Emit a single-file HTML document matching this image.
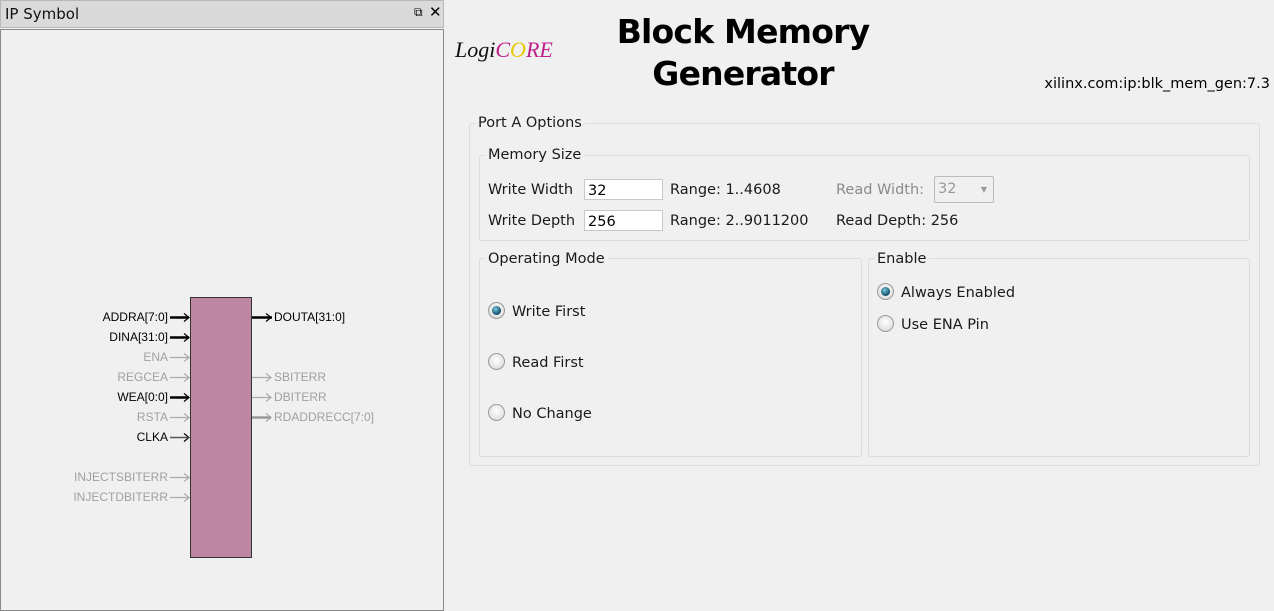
<!DOCTYPE html>
<html><head><style>
body{margin:0;width:1274px;height:600px;background:#f0f0f0;position:relative;overflow:hidden;font-family:"Liberation Sans",Arial,sans-serif;}
.a{position:absolute;white-space:nowrap}
.t{color:#1a1a1a;font-family:"DejaVu Sans",sans-serif;font-size:14.5px;margin-top:2px}
.fs{position:absolute;border:1px solid #d8dde3;border-radius:3px}
.lg{position:absolute;background:#f0f0f0;padding:0 3px;color:#1a1a1a;font-family:"DejaVu Sans",sans-serif;font-size:14.5px;margin-top:2px}
.in{position:absolute;background:#fff;border:1px solid #c8c8c8;width:79px;font-family:"DejaVu Sans",sans-serif;font-size:14.5px;line-height:22px;padding-left:3px;box-sizing:border-box;height:21px}
.r{position:absolute;width:17px;height:17px;border-radius:50%;border:1px solid #9a9a9a;background:radial-gradient(circle at 50% 40%,#fff,#d4d4d4);box-sizing:border-box}
.r.on::after{content:"";position:absolute;left:3px;top:3px;width:9px;height:9px;border-radius:50%;background:radial-gradient(circle at 40% 35%,#7cd,#035 80%)}
.p{position:absolute;font-size:12px;text-align:right;width:160px;left:8px}
.g{color:#a0a0a0}
</style></head><body>
<div class="a" style="left:0;top:0;width:442px;height:26px;background:#dadada;border:1px solid #b8b8b8"></div>
<div class="a" style="left:5px;top:5px;color:#111;font-family:'DejaVu Sans',sans-serif;font-size:15px">IP Symbol</div>
<div class="a" style="left:414px;top:5px;font-size:12px">&#x29c9;</div>
<div class="a" style="left:429px;top:3px;font-size:15px">✕</div>
<div class="a" style="left:0;top:29px;width:442px;height:580px;border:1px solid #8a8a8a;background:#f0f0f0"></div>
<svg class="a" style="left:0;top:0" width="444" height="600">
<rect x="190.5" y="297.5" width="61" height="260" fill="#bd87a4" stroke="#333"/>
<g stroke="#000" stroke-width="2.5" fill="none">
<path d="M170 317.5H189M170 337.5H189M170 397.5H189M252 317.5H272"/></g>
<g stroke="#000" fill="none" stroke-width="1.2"><path d="M184 313.5l5 4-5 4M184 333.5l5 4-5 4M184 393.5l5 4-5 4M266 313.5l5 4-5 4M184 433.5l5 4-5 4"/></g>
<path d="M170 437.5H189" stroke="#555" stroke-width="1.5"/>
<g stroke="#aaa" fill="none" stroke-width="1.2"><path d="M170 357.5H189M184 353.5l5 4-5 4M170 377.5H189M184 373.5l5 4-5 4M170 417.5H189M184 413.5l5 4-5 4M170 477.5H189M184 473.5l5 4-5 4M170 497.5H189M184 493.5l5 4-5 4M252 377.5H271M266 373.5l5 4-5 4M252 397.5H271M266 393.5l5 4-5 4M266 413.5l5 4-5 4"/><path d="M252 417.5H271" stroke-width="2.5" stroke="#999"/></g>
</svg>
<div class="p" style="top:310px">ADDRA[7:0]</div>
<div class="p" style="top:330px">DINA[31:0]</div>
<div class="p g" style="top:350px">ENA</div>
<div class="p g" style="top:370px">REGCEA</div>
<div class="p" style="top:390px">WEA[0:0]</div>
<div class="p g" style="top:410px">RSTA</div>
<div class="p" style="top:430px">CLKA</div>
<div class="p g" style="top:470px">INJECTSBITERR</div>
<div class="p g" style="top:490px">INJECTDBITERR</div>
<div class="a" style="left:274px;top:310px;font-size:12px">DOUTA[31:0]</div>
<div class="a g" style="left:274px;top:370px;font-size:12px">SBITERR</div>
<div class="a g" style="left:274px;top:390px;font-size:12px">DBITERR</div>
<div class="a g" style="left:274px;top:410px;font-size:12px">RDADDRECC[7:0]</div>
<div class="a" style="left:455px;top:37px;font-size:22px;font-style:italic;color:#111;font-family:'Liberation Serif',serif">Logi<span style="color:#c0208a">C<span style="color:#e8c800">O</span>RE</span></div>
<div class="a" style="left:743px;top:11px;transform:translateX(-50%);font-size:33px;font-weight:bold;text-align:center;line-height:42px;color:#000;font-family:'DejaVu Sans',sans-serif;letter-spacing:-0.8px">Block Memory<br>Generator</div>
<div class="a t" style="right:4px;top:74px;color:#000">xilinx.com:ip:blk_mem_gen:7.3</div>
<div class="fs" style="left:469px;top:123px;width:789px;height:341px"></div>
<div class="lg" style="left:475px;top:113px">Port A Options</div>
<div class="fs" style="left:479px;top:155px;width:769px;height:84px"></div>
<div class="lg" style="left:485px;top:145px">Memory Size</div>
<div class="a t" style="left:488px;top:180px">Write Width</div>
<div class="in" style="left:584px;top:179px">32</div>
<div class="a t" style="left:670px;top:180px">Range: 1..4608</div>
<div class="a t" style="left:836px;top:180px;color:#8a8a8a">Read Width:</div>
<div class="a" style="left:934px;top:176px;border:1px solid #bbb;border-radius:2px;font-family:'DejaVu Sans',sans-serif;font-size:14.5px;color:#999;line-height:25px;padding-left:3px;box-sizing:border-box;width:60px;height:27px">32<span style="position:absolute;right:6px;font-size:8px">▼</span></div>
<div class="a t" style="left:488px;top:211px">Write Depth</div>
<div class="in" style="left:584px;top:210px">256</div>
<div class="a t" style="left:670px;top:211px">Range: 2..9011200</div>
<div class="a t" style="left:836px;top:211px">Read Depth: 256</div>
<div class="fs" style="left:479px;top:258px;width:381px;height:197px"></div>
<div class="lg" style="left:485px;top:249px">Operating Mode</div>
<div class="r on" style="left:488px;top:302px"></div><div class="a t" style="left:512px;top:302px">Write First</div>
<div class="r" style="left:488px;top:353px"></div><div class="a t" style="left:512px;top:353px">Read First</div>
<div class="r" style="left:488px;top:404px"></div><div class="a t" style="left:512px;top:404px">No Change</div>
<div class="fs" style="left:868px;top:258px;width:380px;height:197px"></div>
<div class="lg" style="left:874px;top:249px">Enable</div>
<div class="r on" style="left:877px;top:283px"></div><div class="a t" style="left:901px;top:283px">Always Enabled</div>
<div class="r" style="left:877px;top:315px"></div><div class="a t" style="left:901px;top:315px">Use ENA Pin</div>
</body></html>
